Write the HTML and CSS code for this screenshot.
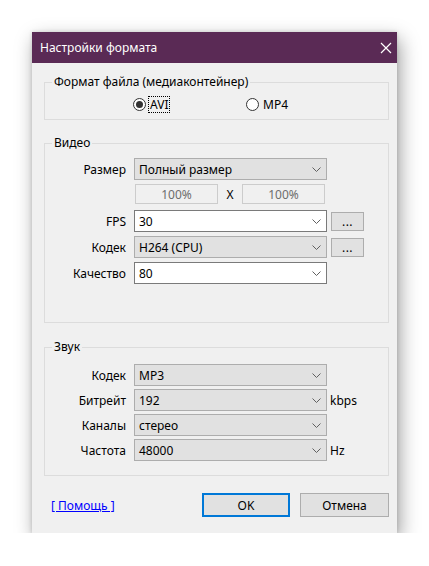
FILE: index.html
```html
<!DOCTYPE html>
<html lang="ru">
<head>
<meta charset="utf-8">
<title>Настройки формата</title>
<link rel="stylesheet" href="styles.css">
</head>
<body>
<div class="dialog">
  <div class="titlebar">
    <span class="title">Настройки формата</span>
    <svg class="close" width="12" height="12" viewBox="0 0 12 12"><path d="M1 1 L11 11 M11 1 L1 11" stroke="#fff" stroke-width="1.2" fill="none"/></svg>
  </div>
  <div class="body">
    <div class="group g1">
      <div class="legend">Формат файла (медиаконтейнер)</div>
      <div class="radios">
        <div class="radio-item first">
          <span class="radio checked"></span><span class="rlabel focus">AVI</span>
        </div>
        <div class="radio-item">
          <span class="radio"></span><span class="rlabel">MP4</span>
        </div>
      </div>
    </div>

    <div class="group g2">
      <div class="legend">Видео</div>
      <div class="rows video">
        <div class="label">Размер</div>
        <div class="combo gray"><span>Полный размер</span><svg class="chev" width="9" height="5" viewBox="0 0 9 5"><path d="M0.5 0.5 L4.5 4.5 L8.5 0.5" stroke="#606060" fill="none"/></svg></div>
        <div class="extra"></div>

        <div class="label"></div>
        <div class="edits"><div class="edit">100%</div><div class="x">X</div><div class="edit">100%</div></div>
        <div class="extra"></div>

        <div class="label">FPS</div>
        <div class="combo white"><span>30</span><svg class="chev" width="9" height="5" viewBox="0 0 9 5"><path d="M0.5 0.5 L4.5 4.5 L8.5 0.5" stroke="#606060" fill="none"/></svg></div>
        <div class="extra"><div class="dots">...</div></div>

        <div class="label">Кодек</div>
        <div class="combo gray"><span>H264 (CPU)</span><svg class="chev" width="9" height="5" viewBox="0 0 9 5"><path d="M0.5 0.5 L4.5 4.5 L8.5 0.5" stroke="#606060" fill="none"/></svg></div>
        <div class="extra"><div class="dots">...</div></div>

        <div class="label">Качество</div>
        <div class="combo white"><span>80</span><svg class="chev" width="9" height="5" viewBox="0 0 9 5"><path d="M0.5 0.5 L4.5 4.5 L8.5 0.5" stroke="#606060" fill="none"/></svg></div>
        <div class="extra"></div>
      </div>
    </div>

    <div class="group g3">
      <div class="legend">Звук</div>
      <div class="rows audio">
        <div class="label">Кодек</div>
        <div class="combo gray"><span>MP3</span><svg class="chev" width="9" height="5" viewBox="0 0 9 5"><path d="M0.5 0.5 L4.5 4.5 L8.5 0.5" stroke="#606060" fill="none"/></svg></div>
        <div class="extra"></div>

        <div class="label">Битрейт</div>
        <div class="combo gray"><span>192</span><svg class="chev" width="9" height="5" viewBox="0 0 9 5"><path d="M0.5 0.5 L4.5 4.5 L8.5 0.5" stroke="#606060" fill="none"/></svg></div>
        <div class="extra unit">kbps</div>

        <div class="label">Каналы</div>
        <div class="combo gray"><span>стерео</span><svg class="chev" width="9" height="5" viewBox="0 0 9 5"><path d="M0.5 0.5 L4.5 4.5 L8.5 0.5" stroke="#606060" fill="none"/></svg></div>
        <div class="extra"></div>

        <div class="label">Частота</div>
        <div class="combo gray"><span>48000</span><svg class="chev" width="9" height="5" viewBox="0 0 9 5"><path d="M0.5 0.5 L4.5 4.5 L8.5 0.5" stroke="#606060" fill="none"/></svg></div>
        <div class="extra unit">Hz</div>
      </div>
    </div>

    <div class="footer">
      <a class="help" href="#">[&nbsp;Помощь&nbsp;]</a>
      <div class="btn ok">OK</div>
      <div class="btn">Отмена</div>
    </div>
  </div>
</div>
</body>
</html>
```

FILE: styles.css
```css
html, body {
  margin: 0;
  padding: 0;
  background: #ffffff;
}
body {
  font-family: "Noto Sans", "Open Sans", "DejaVu Sans", sans-serif;
  font-size: 12px;
  color: #000;
}
.dialog {
  margin: 32px 0 0 32px;
  width: 365px;
  background: #f0f0f0;
  box-shadow: 3px 7px 18px rgba(0, 0, 0, 0.38), 0 0 4px rgba(0,0,0,0.15);
}
.titlebar {
  height: 31px;
  background: #5a2a55;
  color: #fff;
  display: flex;
  align-items: center;
  padding: 0 5px 0 8px;
}
.title {
  flex: 1;
  font-size: 12px;
}
.close {
  display: block;
}
.body {
  padding: 0 8px 16px 12px;
}
.group {
  border: 1px solid #dcdcdc;
}
.legend {
  height: 16px;
  line-height: 16px;
  margin-top: -9px;
  margin-left: 7px;
  padding: 0 2px;
  background: #f0f0f0;
  width: max-content;
}
.g1 {
  margin-top: 19px;
  padding-bottom: 7px;
}
.g2 {
  margin-top: 23px;
  padding-bottom: 38px;
}
.g3 {
  margin-top: 24px;
  padding-bottom: 14px;
}
.radios {
  display: flex;
  height: 16px;
  margin-top: 6px;
  padding-left: 88px;
  align-items: center;
}
.radio-item {
  display: flex;
  align-items: center;
}
.radio-item.first {
  width: 113px;
}
.radio {
  width: 11px;
  height: 11px;
  border: 1px solid #333;
  border-radius: 50%;
  background: #fff;
  display: flex;
  align-items: center;
  justify-content: center;
}
.radio.checked::after {
  content: "";
  width: 7px;
  height: 7px;
  border-radius: 50%;
  background: #333;
}
.rlabel {
  margin-left: 2px;
  padding: 0 1px;
  line-height: 15px;
  border: 1px solid transparent;
}
.rlabel.focus {
  border: 1px dotted #000;
}
.rows {
  display: grid;
  grid-template-columns: 81px 193px 40px;
  column-gap: 8px;
  grid-auto-rows: 22px;
  align-items: center;
}
.video {
  margin-top: 7px;
  row-gap: 4px;
}
.audio {
  margin-top: 9px;
  row-gap: 3px;
}
.label {
  text-align: right;
}
.combo {
  box-sizing: border-box;
  height: 22px;
  display: flex;
  align-items: center;
  padding: 0 5px 0 4px;
  border: 1px solid #adadad;
}
.combo span {
  flex: 1;
}
.combo.gray {
  background: #e1e1e1;
}
.combo.white {
  background: #fff;
  border-color: #7a7a7a;
}
.chev {
  display: block;
}
.extra {
  margin-left: -4px;
}
.unit {
  margin-left: -5px;
}
.edits {
  display: flex;
  align-items: center;
  padding-left: 1px;
  height: 22px;
}
.edit {
  box-sizing: border-box;
  width: 83px;
  height: 20px;
  margin-top: -2px;
  border: 1px solid #cccccc;
  color: #6d6d6d;
  display: flex;
  align-items: center;
  justify-content: center;
}
.x {
  width: 24px;
  text-align: center;
  margin-top: -2px;
}
.dots {
  box-sizing: border-box;
  width: 33px;
  height: 19px;
  background: #e1e1e1;
  border: 1px solid #adadad;
  text-align: center;
  line-height: 17px;
  letter-spacing: 0.5px;
}
.footer {
  display: flex;
  align-items: center;
  margin-top: 17px;
  height: 24px;
}
.help {
  color: #0000ff;
  text-decoration: underline;
  margin-left: 7px;
  flex: 1;
}
.btn {
  box-sizing: border-box;
  width: 89px;
  height: 24px;
  background: #e1e1e1;
  border: 1px solid #adadad;
  display: flex;
  align-items: center;
  justify-content: center;
  margin-left: 10px;
}
.btn.ok {
  border: 2px solid #0078d7;
  width: 88px;
}
```
